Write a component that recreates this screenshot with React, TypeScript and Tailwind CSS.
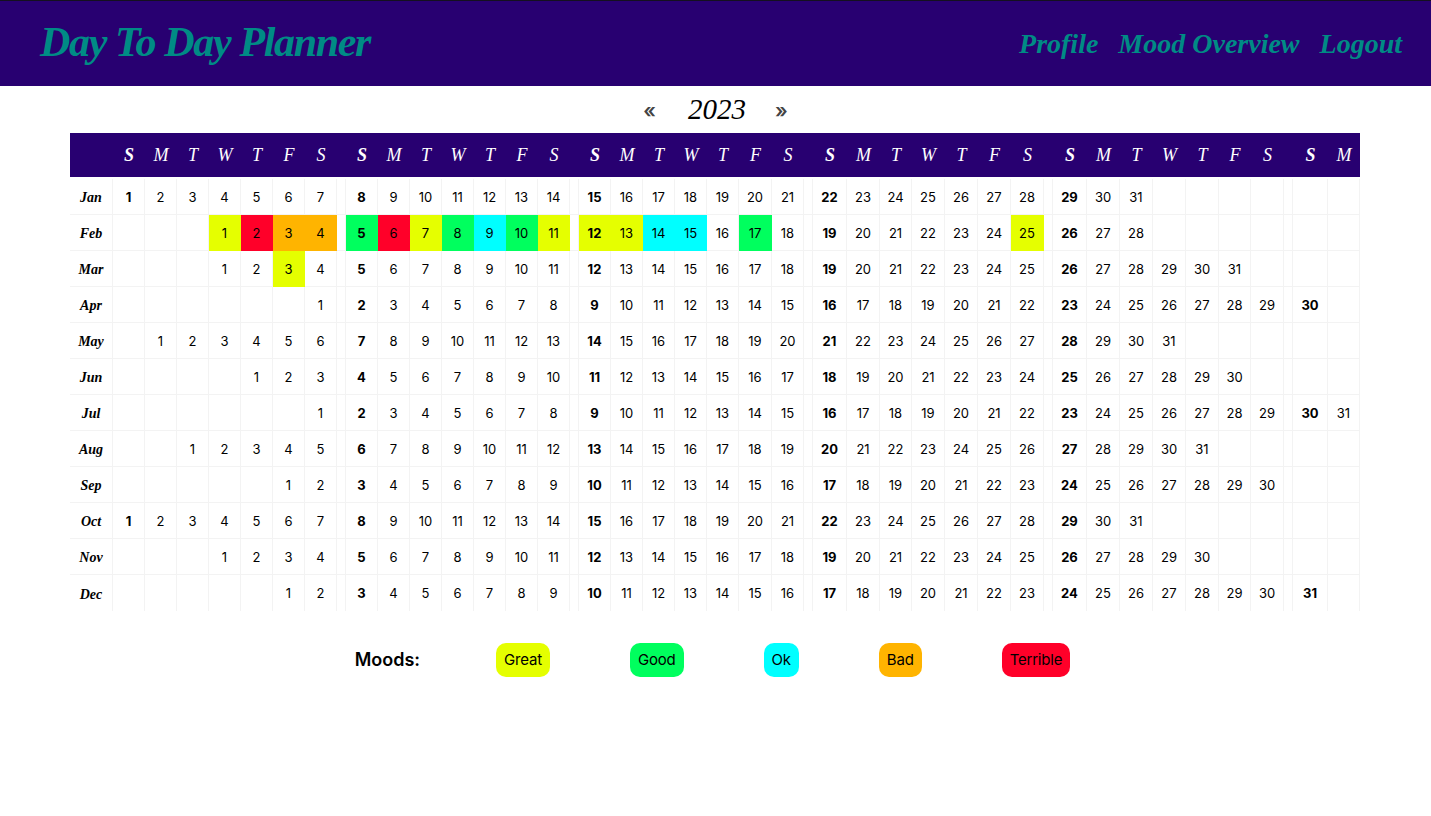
const months = ['Jan', 'Feb', 'Mar', 'Apr', 'May', 'Jun', 'Jul', 'Aug', 'Sep', 'Oct', 'Nov', 'Dec']
const weekdays = ['S', 'M', 'T', 'W', 'T', 'F', 'S']

// column widths are not even in the picture, the table stretched the later weeks a bit
const weekWidths = [
    [32, 32, 32, 32, 32, 32, 32],
    [32, 32, 32, 32, 32, 32, 32],
    [32, 32, 32, 32, 32, 33, 32],
    [34, 33, 32, 33, 33, 33, 33],
    [34, 33, 33, 33, 33, 32, 33],
    [35, 32],
]

const moodColors: Record<string, string> = {
    great: 'bg-[#e5ff00]',
    good: 'bg-[#00ff5e]',
    ok: 'bg-[#00ffff]',
    bad: 'bg-[#ffb400]',
    terrible: 'bg-[#ff0029]',
}

const moods: Record<string, string> = {
    '1-1': 'great', '1-2': 'terrible', '1-3': 'bad', '1-4': 'bad', '1-5': 'good', '1-6': 'terrible',
    '1-7': 'great', '1-8': 'good', '1-9': 'ok', '1-10': 'good', '1-11': 'great', '1-12': 'great',
    '1-13': 'great', '1-14': 'ok', '1-15': 'ok', '1-17': 'good', '1-25': 'great', '2-3': 'great',
}

const legend = [
    { name: 'Great', color: 'bg-[#e5ff00]' },
    { name: 'Good', color: 'bg-[#00ff5e]' },
    { name: 'Ok', color: 'bg-[#00ffff]' },
    { name: 'Bad', color: 'bg-[#ffb400]' },
    { name: 'Terrible', color: 'bg-[#ff0029]' },
]

const script = "[font-family:'Liberation_Serif',cursive] italic"

const App = () => {
    const cells = weekWidths.flatMap((w) => w).length

    const renderRow = (month: number) => {
        const offset = new Date(2023, month, 1).getDay()
        const total = new Date(2023, month + 1, 0).getDate()
        const out = []
        for (let i = 0; i < cells; i++) {
            const day = i - offset + 1
            const show = day >= 1 && day <= total
            const mood = show ? moods[`${month}-${day}`] : undefined
            out.push(
                <td
                    key={i}
                    className={`border-r border-b group-last:border-b-0 p-0 pt-[2px] text-center ${i % 7 === 0 ? 'font-bold' : ''} ${mood ? `border-transparent ${moodColors[mood]}` : 'border-[#f3f3f3]'}`}
                >
                    {show ? day : ''}
                </td>
            )
            if (i % 7 === 6 && i < cells - 1) {
                out.push(<td key={`gap-${i}`} className="border-r border-b border-[#f3f3f3] group-last:border-b-0 p-0"></td>)
            }
        }
        return out
    }

    return (
        <div className="min-h-[816px] bg-white font-['Inter',sans-serif] text-black">
            <header className="h-[86px] border-t border-[#14101f] bg-[#280071] pl-10 pr-[29px] flex items-center justify-between text-[#008b85]">
                <h1 className={`${script} text-[42px] leading-none font-bold tracking-[-1.35px] pb-1`}>Day To Day Planner</h1>
                <nav className={`${script} flex gap-5 text-[28px] font-bold leading-none`}>
                    <a>Profile</a>
                    <a>Mood Overview</a>
                    <a>Logout</a>
                </nav>
            </header>

            <div className="h-[47px] flex items-center justify-center">
                <button className="text-[20px] font-semibold text-[#444444] mt-[3px]">«</button>
                <span className={`${script} text-[29px] ml-8 mr-[29px]`}>2023</span>
                <button className="text-[20px] font-semibold text-[#444444] mt-[3px]">»</button>
            </div>

            <table className="ml-[70px] w-[1290px] table-fixed border-separate border-spacing-0 text-[13px]">
                <colgroup>
                    <col className="w-[43px]" />
                    {weekWidths.map((week, w) => [
                        ...week.map((width, d) => <col key={`${w}-${d}`} style={{ width }} />),
                        w < weekWidths.length - 1 ? <col key={`s-${w}`} className="w-[9px]" /> : null,
                    ])}
                </colgroup>
                <thead>
                    <tr className="h-[46px]">
                        <th className="bg-[#280071] border-b-2 border-white"></th>
                        {weekWidths.map((week, w) => [
                            ...week.map((_, d) => (
                                <th
                                    key={`${w}-${d}`}
                                    className={`${script} bg-[#280071] border-b-2 border-white p-0 text-[18px] text-white ${d === 0 ? 'font-bold' : 'font-normal'}`}
                                >
                                    {weekdays[d]}
                                </th>
                            )),
                            w < weekWidths.length - 1 ? <th key={`s-${w}`} className="bg-[#280071] border-b-2 border-white"></th> : null,
                        ])}
                    </tr>
                </thead>
                <tbody>
                    {months.map((name, m) => (
                        <tr key={name} className="h-9 group">
                            <td className={`${script} border-r border-b border-[#f3f3f3] group-last:border-b-0 p-0 pt-[2px] text-center text-[14px] font-bold`}>{name}</td>
                            {renderRow(m)}
                        </tr>
                    ))}
                </tbody>
            </table>

            <div className="mt-8 flex items-center justify-center gap-20 pr-[6px]">
                <span className="text-lg font-semibold -mr-[4px]">Moods:</span>
                {legend.map((mood) => (
                    <span key={mood.name} className={`${mood.color} h-[34px] px-2 rounded-[10px] flex items-center text-[15px] tracking-[-0.2px]`}>
                        {mood.name}
                    </span>
                ))}
            </div>
        </div>
    )
}

export default App
